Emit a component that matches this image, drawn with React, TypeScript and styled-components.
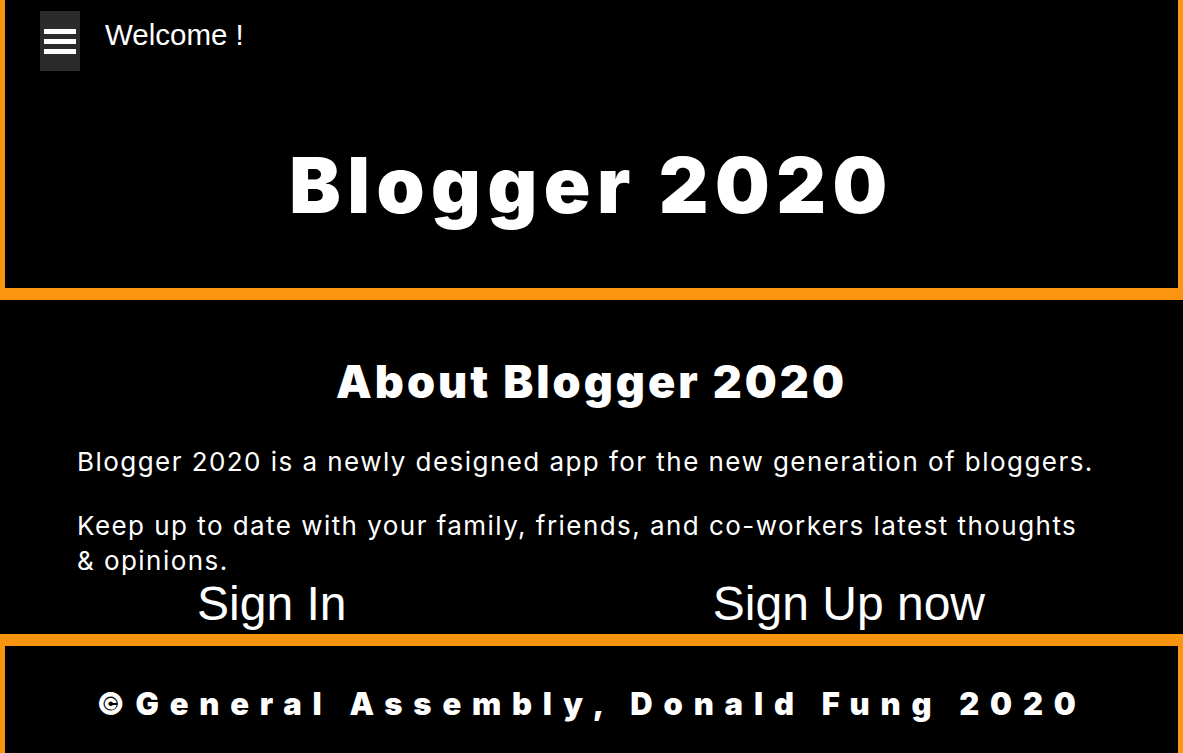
import React from "react";
import styled, { createGlobalStyle } from "styled-components";

const Global = createGlobalStyle`
  html, body { margin: 0; padding: 0; background: #000; }
  body { color: #fff; font-family: Inter, sans-serif; overflow: hidden; }
`;

const ORANGE = "#fb9510";

const Page = styled.div`
  display: flex;
  flex-direction: column;
  min-height: 753px;
  background: #000;
`;

const Header = styled.header`
  border: 5px solid ${ORANGE};
  border-top: none;
  border-bottom-width: 12px;
  height: 300px;
  box-sizing: border-box;
  display: flex;
  flex-direction: column;
`;

const TopBar = styled.div`
  display: flex;
  align-items: flex-start;
  gap: 25px;
  padding: 11px 0 0 35px;
`;

const MenuButton = styled.button`
  width: 40px;
  height: 60px;
  background: #2b2b2b;
  border: none;
  padding: 0 4px;
  display: flex;
  flex-direction: column;
  justify-content: center;
  gap: 5px;
  cursor: pointer;
`;

const Bar = styled.span`
  display: block;
  height: 5px;
  background: #fff;
`;

const Welcome = styled.span`
  font-family: "Liberation Sans", Arial, sans-serif;
  font-size: 29.5px;
  line-height: 48px;
`;

const Title = styled.h1`
  margin: 76px 0 0;
  text-align: center;
  font-family: Inter, sans-serif;
  font-weight: 900;
  font-size: 77px;
  letter-spacing: 6.5px;
  line-height: 1;
`;

const Main = styled.main`
  flex: 1;
  padding: 0 77px;
  display: flex;
  flex-direction: column;
`;

const About = styled.h2`
  margin: 57px 0 0;
  text-align: center;
  font-family: Inter, sans-serif;
  font-weight: 900;
  font-size: 45px;
  letter-spacing: 3px;
  line-height: 50px;
`;

const Para = styled.p`
  margin: 0;
  padding-right: 9px;
  font-family: Inter, sans-serif;
  font-size: 26px;
  letter-spacing: 1.45px;
  line-height: 35px;
  & + & { margin-top: 29px; }
  &:first-of-type { margin-top: 37px; }
`;

const Actions = styled.div`
  display: flex;
  justify-content: space-between;
  padding: 0 121px 0 120px;
  margin-top: 2px;
`;

const ActionLink = styled.a`
  font-family: "Liberation Sans", Arial, sans-serif;
  font-size: 48px;
  line-height: 48px;
  color: #fff;
  text-decoration: none;
`;

const Footer = styled.footer`
  border: 5px solid ${ORANGE};
  border-top-width: 12px;
  border-bottom: none;
  height: 119px;
  box-sizing: border-box;
  display: flex;
  align-items: center;
  justify-content: center;
`;

const FooterText = styled.p`
  margin: 8px 0 0;
  font-family: Inter, sans-serif;
  font-weight: 900;
  font-size: 31px;
  letter-spacing: 10.8px;
`;

export default function App() {
  return (
    <>
      <Global />
      <Page>
        <Header>
          <TopBar>
            <MenuButton aria-label="menu">
              <Bar />
              <Bar />
              <Bar />
            </MenuButton>
            <Welcome>Welcome !</Welcome>
          </TopBar>
          <Title>Blogger 2020</Title>
        </Header>
        <Main>
          <About>About Blogger 2020</About>
          <Para>Blogger 2020 is a newly designed app for the new generation of bloggers.</Para>
          <Para>Keep up to date with your family, friends, and co-workers latest thoughts &amp; opinions.</Para>
          <Actions>
            <ActionLink href="#">Sign In</ActionLink>
            <ActionLink href="#">Sign Up now</ActionLink>
          </Actions>
        </Main>
        <Footer>
          <FooterText>©General Assembly, Donald Fung 2020</FooterText>
        </Footer>
      </Page>
    </>
  );
}
